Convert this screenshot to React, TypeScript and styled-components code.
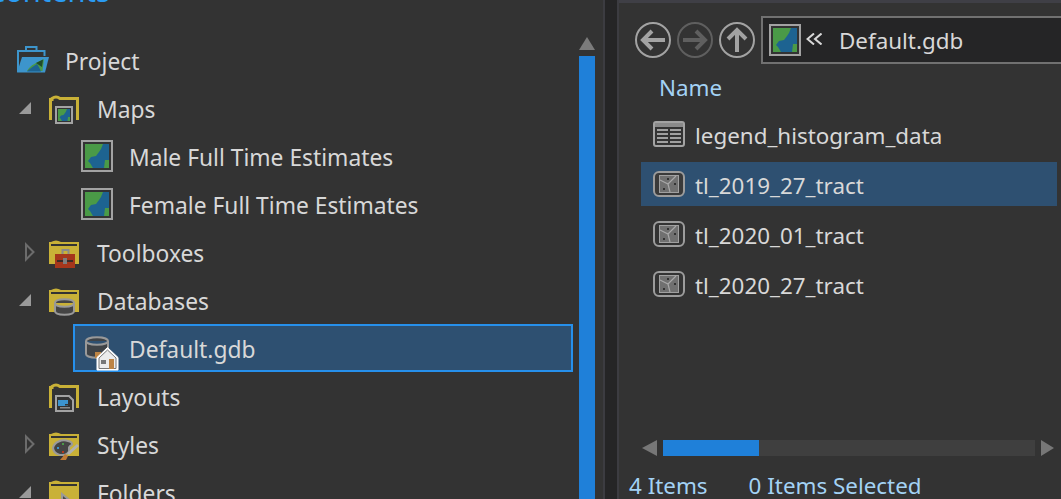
import React from "react";
import styled, { createGlobalStyle } from "styled-components";

const Global = createGlobalStyle`
  html, body { margin: 0; padding: 0; width: 100%; height: 100%; overflow: hidden; background: #333333; }
  #root { height: 100%; }
`;

const Page = styled.div`
  display: flex;
  width: 1061px;
  height: 499px;
  overflow: hidden;
  background: #333333;
  color: #d8d8d8;
  font-family: "Noto Sans", "Open Sans", sans-serif;
  font-size: 22.4px;
`;

const LeftPane = styled.section`
  display: flex;
  flex-direction: column;
  width: 603px;
  flex: none;
`;

const TitleClip = styled.div`
  height: 4px;
  overflow: hidden;
  flex: none;
`;

const Title = styled.h1`
  margin: -24px 0 0 -13px;
  font-size: 29px;
  line-height: 30px;
  font-weight: 400;
  color: #2a9bf2;
`;

const LeftBody = styled.div`
  display: flex;
  flex: 1;
  min-height: 0;
`;

const Tree = styled.div`
  width: 573px;
  flex: none;
  padding-top: 32px;
`;

const Row = styled.div<{ $selected?: boolean }>`
  display: flex;
  align-items: center;
  height: 48px;
  box-sizing: border-box;
  padding-left: ${(p) => (p.$selected ? "6px" : "17px")};
  margin-left: ${(p) => (p.$selected ? "73px" : "0")};
  background: ${(p) => (p.$selected ? "#2e5071" : "transparent")};
  border: ${(p) => (p.$selected ? "2px solid #2690ec" : "none")};
`;

const Slot = styled.span<{ $level: number }>`
  display: flex;
  align-items: center;
  flex: none;
  width: ${(p) => p.$level * 32}px;
  height: 24px;
`;

const Glyph = styled.svg`
  display: block;
  flex: none;
  overflow: visible;
`;

const Label = styled.span`
  margin-left: 16px;
  padding-top: 3px;
  white-space: nowrap;
  font-size: 22.8px;
  line-height: 28px;
  color: #d8d8d8;
`;

const VScroll = styled.div`
  display: flex;
  flex-direction: column;
  align-items: center;
  width: 16px;
  margin-left: 6px;
  padding-top: 33px;
`;

const VThumb = styled.div`
  flex: 1;
  width: 16px;
  margin-top: 6px;
  background: #1f80d9;
`;

const Splitter = styled.div`
  flex: none;
  width: 12px;
  background: #252526;
  border-left: 2px solid #3c3c41;
  border-right: 2px solid #3c3c41;
`;

const RightPane = styled.section`
  display: flex;
  flex-direction: column;
  flex: 1;
  min-width: 0;
  overflow: hidden;
  border-top: 3px solid #3f3f46;
`;

const Toolbar = styled.div`
  display: flex;
  align-items: center;
  gap: 6px;
  height: 48px;
  margin-top: 13px;
  padding-left: 16px;
  flex: none;
`;

const AddressBar = styled.div`
  display: flex;
  align-items: center;
  flex: none;
  width: 320px;
  height: 48px;
  box-sizing: border-box;
  padding-left: 6px;
  background: #252526;
  border: 2px solid #717171;
`;

const Chevrons = styled.svg`
  display: block;
  flex: none;
  margin-left: 5px;
  margin-bottom: 3px;
`;

const AddressText = styled.span`
  margin-left: 17px;
  padding-top: 2px;
  line-height: 28px;
  color: #d8d8d8;
`;

const Header = styled.div`
  display: flex;
  align-items: center;
  height: 48px;
  box-sizing: border-box;
  padding: 0 0 2px 40px;
  color: #a3d2f5;
  flex: none;
`;

const List = styled.div`
  display: flex;
  flex-direction: column;
  gap: 6px;
  flex: 1;
  min-height: 0;
  margin: 0 4px 0 22px;
`;

const Item = styled.div<{ $selected?: boolean }>`
  display: flex;
  align-items: center;
  gap: 10px;
  height: 44px;
  padding-left: 12px;
  background: ${(p) => (p.$selected ? "#2e5071" : "transparent")};
`;

const ItemName = styled.span`
  padding-top: 3px;
  line-height: 28px;
  color: #d8d8d8;
`;

const HScroll = styled.div`
  display: flex;
  align-items: center;
  gap: 6px;
  height: 16px;
  margin: 0 7px 0 23px;
  flex: none;
`;

const Track = styled.div`
  flex: 1;
  height: 16px;
  background: #3f3f3f;
`;

const Thumb = styled.div`
  width: 96px;
  height: 16px;
  background: #1f80d9;
`;

const Footer = styled.div`
  display: flex;
  gap: 41px;
  height: 43px;
  box-sizing: border-box;
  padding: 16px 0 0 10px;
  line-height: 28px;
  color: #a3d2f5;
  flex: none;
`;

const YEL = "#c9b137";
const GR = "#a3a3a3";

const MapFill = ({ x, y, s }: { x: number; y: number; s: number }) => (
  <g transform={`translate(${x} ${y}) scale(${s})`}>
    <rect width="24" height="24" fill="#4a9a47" />
    <path d="M18 0H24V16H20L19 24H8L5 19L3 17L6 13L11 12L14 8L16 5Z" fill="#1d6391" />
  </g>
);

const MapIcon = () => (
  <Glyph width="32" height="32" viewBox="0 0 32 32">
    <rect x="1" y="1" width="30" height="30" fill="#333" stroke={GR} strokeWidth="2" />
    <MapFill x={4} y={4} s={1} />
  </Glyph>
);

const FolderOutline = () => (
  <path
    d="M1.5 28V7.5H3V6.5Q7 3.5 11 6.5H28.5V28"
    fill="none"
    stroke={YEL}
    strokeWidth="3"
  />
);

const FolderSolid = () => (
  <>
    <path d="M0 7V6H2Q7 3 12 6H30V8H0Z" fill={YEL} />
    <rect x="2" y="8" width="26" height="2" fill="#333" />
    <rect x="0" y="8" width="2" height="2" fill={YEL} />
    <rect x="28" y="8" width="2" height="2" fill={YEL} />
    <rect x="0" y="10" width="30" height="18" fill={YEL} />
  </>
);

const MapsFolder = () => (
  <Glyph width="32" height="32" viewBox="0 0 32 32">
    <FolderOutline />
    <rect x="7" y="15" width="16" height="16" fill="#333" stroke={GR} strokeWidth="2" />
    <MapFill x={9} y={17} s={0.5} />
  </Glyph>
);

const ToolboxFolder = () => (
  <Glyph width="32" height="32" viewBox="0 0 32 32">
    <FolderSolid />
    <rect x="13.5" y="14" width="6" height="6" fill="none" stroke="#8a8a8a" strokeWidth="2" />
    <rect x="6" y="18" width="20" height="14" fill="#a5361b" />
    <rect x="8" y="24" width="16" height="2" fill="#3b2a25" />
    <rect x="14" y="22" width="4" height="6" fill="#7d7d7d" />
  </Glyph>
);

const DbShape = ({ x, y, w, h, fill }: { x: number; y: number; w: number; h: number; fill: string }) => (
  <path
    d={`M${x} ${y + 4}C${x} ${y - 1} ${x + w} ${y - 1} ${x + w} ${y + 4}V${y + h - 4}C${x + w} ${y + h + 1} ${x} ${y + h + 1} ${x} ${y + h - 4}ZM${x} ${y + 4}C${x} ${y + 9} ${x + w} ${y + 9} ${x + w} ${y + 4}`}
    fill={fill}
    stroke="#999"
    strokeWidth="2"
  />
);

const DatabaseFolder = () => (
  <Glyph width="32" height="32" viewBox="0 0 32 32">
    <FolderSolid />
    <DbShape x={6} y={15} w={19} h={16} fill="#444" />
  </Glyph>
);

const HomeDb = () => (
  <Glyph width="32" height="32" viewBox="0 0 32 32">
    <DbShape x={5} y={5} w={22} h={21} fill="#3f4347" />
    <rect x="14" y="20" width="6" height="6" fill="#bd8444" />
    <path d="M26.5 15.5L37 25.5V38H16V25.5Z" fill="#fff" stroke="#fff" strokeWidth="1" strokeLinejoin="round" />
    <path d="M26.5 18L35 26V36.5H18V26Z" fill="#ececec" stroke="#777" strokeWidth="1" />
    <rect x="20" y="28" width="5" height="4" fill="#777" />
    <rect x="28" y="27" width="5" height="10" fill="#bd8444" />
  </Glyph>
);

const LayoutFolder = () => (
  <Glyph width="32" height="32" viewBox="0 0 32 32">
    <FolderOutline />
    <path d="M7 16H20L24 20V31H7Z" fill="#333" stroke={GR} strokeWidth="2" />
    <rect x="9" y="20" width="10" height="6" fill="#3c94cf" />
    <rect x="16" y="24" width="5" height="1.5" fill="#333" />
    <rect x="11" y="27" width="10" height="1.5" fill="#8a8a8a" />
  </Glyph>
);

const StylesFolder = () => (
  <Glyph width="32" height="32" viewBox="0 0 32 32">
    <FolderSolid />
    <path
      d="M4 20C5 14 13 11 19 13C24 14 24 17 21 18C18 20 22 22 19 25C14 29 5 27 4 20Z"
      fill="#444"
      stroke="#9a9a9a"
      strokeWidth="2"
    />
    <rect x="8" y="19" width="2" height="2" fill="#3c94cf" />
    <rect x="13" y="15" width="2" height="2" fill="#4a9a47" />
    <rect x="13" y="23" width="2" height="2" fill="#b5391f" />
    <path d="M29 17L19 26" stroke="#b0b0b0" strokeWidth="3" />
    <path d="M16 26L19 28L17 32H11Z" fill="#c07a35" />
  </Glyph>
);

const FoldersFolder = () => (
  <Glyph width="32" height="32" viewBox="0 0 32 32">
    <FolderSolid />
    <path d="M13 18L24 27L13 36Z" fill="#4a4a4a" stroke="#9a9a9a" strokeWidth="2" />
  </Glyph>
);

const ProjectIcon = () => (
  <Glyph width="32" height="32" viewBox="0 0 32 32">
    <path d="M9 7V3H19.5V7" fill="none" stroke="#3d95cc" strokeWidth="2" />
    <path d="M1 28V7H27.5V12" fill="none" stroke="#3d95cc" strokeWidth="2" />
    <path d="M5 13H32L28 28.5H0Z" fill="#3d95cc" />
    <path d="M10 27C13 21 21 18 27 15L25.5 27Z" fill="#4a9a47" />
    <path d="M10 27.5C13 24 17 22 20 20C22 23 23 25 24 27.5Z" fill="#1d6391" />
    <path d="M19 19L26 15.5L25 23Z" fill="#1f4a2a" />
  </Glyph>
);

const OpenArrow = () => (
  <Glyph width="14" height="12" viewBox="0 0 14 12" style={{ marginLeft: 2 }}>
    <path d="M12 0V12H0Z" fill="#9a9a9a" />
  </Glyph>
);

const ClosedArrow = () => (
  <Glyph width="10" height="18" viewBox="0 0 10 18" style={{ marginLeft: 8 }}>
    <path d="M1 1.5L8.5 9L1 16.5Z" fill="none" stroke="#6c6c6c" strokeWidth="2" />
  </Glyph>
);

const NavButton = ({ d, color }: { d: string; color: string }) => (
  <Glyph width="36" height="36" viewBox="0 0 36 36">
    <circle cx="18" cy="18" r="17" fill="none" stroke={color} strokeWidth="2" />
    <path d={d} fill="none" stroke={color} strokeWidth="4" />
  </Glyph>
);

const TableIcon = () => (
  <Glyph width="32" height="26" viewBox="0 0 32 26">
    <rect x="1" y="1" width="30" height="24" rx="2" fill="#333" stroke={GR} strokeWidth="2" />
    <rect x="2" y="2" width="28" height="4" fill="#8a8a8a" />
    <path d="M4 9H15M17 9H28M4 13H15M17 13H28M4 17H15M17 17H28M4 21H15M17 21H28" stroke="#a0a0a0" strokeWidth="2" />
  </Glyph>
);

const FeatureIcon = ({ dark }: { dark?: boolean }) => (
  <Glyph width="32" height="26" viewBox="0 0 32 26">
    <rect x="1" y="1" width="30" height="24" rx="5" fill={dark ? "#3a3a3a" : "#333"} stroke="#9c9c9c" strokeWidth="2" />
    <rect x="6.5" y="4.5" width="19" height="17" fill="#707070" stroke="#a0a0a0" strokeWidth="1" />
    <path d="M7 9L15 13L23 5M15 13L17 21" fill="none" stroke="#a8a8a8" strokeWidth="1.2" />
    <rect x="14" y="7" width="2" height="2" fill="#333" />
    <rect x="21" y="12" width="2" height="2" fill="#333" />
    <rect x="10" y="17" width="2" height="2" fill="#333" />
  </Glyph>
);

const treeRows: { name: string; level: number; arrow?: "open" | "closed"; icon: React.ReactNode; selected?: boolean }[] = [
  { name: "Project", level: 0, icon: <ProjectIcon /> },
  { name: "Maps", level: 1, arrow: "open", icon: <MapsFolder /> },
  { name: "Male Full Time Estimates", level: 2, icon: <MapIcon /> },
  { name: "Female Full Time Estimates", level: 2, icon: <MapIcon /> },
  { name: "Toolboxes", level: 1, arrow: "closed", icon: <ToolboxFolder /> },
  { name: "Databases", level: 1, arrow: "open", icon: <DatabaseFolder /> },
  { name: "Default.gdb", level: 0, icon: <HomeDb />, selected: true },
  { name: "Layouts", level: 1, icon: <LayoutFolder /> },
  { name: "Styles", level: 1, arrow: "closed", icon: <StylesFolder /> },
  { name: "Folders", level: 1, arrow: "open", icon: <FoldersFolder /> },
];

export default function App() {
  return (
    <Page>
      <Global />
      <LeftPane>
        <TitleClip>
          <Title>Contents</Title>
        </TitleClip>
        <LeftBody>
          <Tree>
            {treeRows.map((r) => (
              <Row key={r.name} $selected={r.selected}>
                <Slot $level={r.level}>
                  {r.arrow === "open" && <OpenArrow />}
                  {r.arrow === "closed" && <ClosedArrow />}
                </Slot>
                {r.icon}
                <Label>{r.name}</Label>
              </Row>
            ))}
          </Tree>
          <VScroll>
            <Glyph width="16" height="13" viewBox="0 0 16 13">
              <path d="M8 0L16 13H0Z" fill="#7b7b7b" />
            </Glyph>
            <VThumb />
          </VScroll>
        </LeftBody>
      </LeftPane>
      <Splitter />
      <RightPane>
        <Toolbar>
          <NavButton d="M30 18H9M17 9L8 18L17 27" color="#a3a3a3" />
          <NavButton d="M6 18H27M19 9L28 18L19 27" color="#5f5f5f" />
          <NavButton d="M18 30V9M9 17L18 8L27 17" color="#a3a3a3" />
          <AddressBar>
            <MapIcon />
            <Chevrons width="16" height="12" viewBox="0 0 16 12">
              <path d="M8 0.5L1.5 6L8 11.5M15.5 0.5L9 6L15.5 11.5" fill="none" stroke="#d8d8d8" strokeWidth="2" />
            </Chevrons>
            <AddressText>Default.gdb</AddressText>
          </AddressBar>
        </Toolbar>
        <Header>Name</Header>
        <List>
          <Item>
            <TableIcon />
            <ItemName>legend_histogram_data</ItemName>
          </Item>
          <Item $selected>
            <FeatureIcon dark />
            <ItemName>tl_2019_27_tract</ItemName>
          </Item>
          <Item>
            <FeatureIcon />
            <ItemName>tl_2020_01_tract</ItemName>
          </Item>
          <Item>
            <FeatureIcon />
            <ItemName>tl_2020_27_tract</ItemName>
          </Item>
        </List>
        <HScroll>
          <Glyph width="15" height="16" viewBox="0 0 15 16">
            <path d="M15 0V16L0 8Z" fill="#777" />
          </Glyph>
          <Track>
            <Thumb />
          </Track>
          <Glyph width="13" height="16" viewBox="0 0 13 16">
            <path d="M0 0V16L13 8Z" fill="#777" />
          </Glyph>
        </HScroll>
        <Footer>
          <span>4 Items</span>
          <span>0 Items Selected</span>
        </Footer>
      </RightPane>
    </Page>
  );
}
